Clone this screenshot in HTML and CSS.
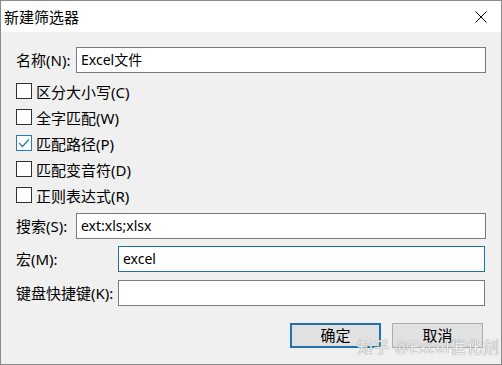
FILE: index.html
```html
<!DOCTYPE html>
<html>
    <head>
        <title>新建筛选器</title>
        <link rel="stylesheet" href="styles.css">
    </head>
    <body>
        <div class="window">
<!----- TITLE BAR ----->
            <div class="titleBar">
                <span class="title">新建筛选器</span>
                <svg class="close" width="12" height="12" viewBox="0 0 12 12">
                    <path d="M0.5 0.5 L11.5 11.5 M11.5 0.5 L0.5 11.5" stroke="#000" stroke-width="1" fill="none"/>
                </svg>
            </div>

<!----- FORM ----->
            <div class="content">
                <div class="row">
                    <label class="label">名称(N):</label>
                    <div class="field">Excel文件</div>
                </div>

                <div class="checks">
                    <div class="check"><span class="box"></span>区分大小写(C)</div>
                    <div class="check"><span class="box"></span>全字匹配(W)</div>
                    <div class="check"><span class="box checked">
                        <svg width="12" height="10" viewBox="0 0 12 10">
                            <path d="M1 5 L4.5 8.5 L11 1.5" stroke="#2c78b4" stroke-width="1.3" fill="none"/>
                        </svg>
                    </span>匹配路径(P)</div>
                    <div class="check"><span class="box"></span>匹配变音符(D)</div>
                    <div class="check"><span class="box"></span>正则表达式(R)</div>
                </div>

                <div class="row search">
                    <label class="label">搜索(S):</label>
                    <div class="field">ext:xls;xlsx</div>
                </div>
                <div class="row macro">
                    <label class="label wide">宏(M):</label>
                    <div class="field focused">excel</div>
                </div>
                <div class="row hotkey">
                    <label class="label wide">键盘快捷键(K):</label>
                    <div class="field"></div>
                </div>

                <div class="buttons">
                    <div class="button default">确定</div>
                    <div class="button">取消</div>
                </div>
            </div>

            <div class="watermark">知乎 @Excel催化剂</div>
        </div>
    </body>
</html>
```

FILE: styles.css
```css
body{
    margin: 0;
    font-family: "Noto Sans", "Noto Sans CJK SC", sans-serif;
    font-size: 15px;
    color: #000;
}
.window{
    position: relative;
    width: 502px;
    height: 365px;
    box-sizing: border-box;
    border: 1px solid #8a8a8a;
    background-color: #f0f0f0;
    overflow: hidden;
}

/*----- TITLE BAR -----*/
.titleBar{
    height: 31px;
    background-color: #fff;
    display: flex;
    align-items: center;
    justify-content: space-between;
    padding: 0 14px 0 3px;
}
.title{
    line-height: 20px;
}
.close{
    display: block;
}

/*----- FORM -----*/
.content{
    padding: 15px 15px 0 15px;
}
.row{
    display: flex;
    align-items: center;
    height: 26px;
}
.label{
    width: 60px;
    flex-shrink: 0;
    line-height: 20px;
}
.label.wide{
    width: 102px;
}
.field{
    flex: 1;
    height: 26px;
    box-sizing: border-box;
    border: 1px solid #7a7a7a;
    background-color: #fff;
    padding: 0 4px;
    line-height: 23px;
    font-size: 14px;
}
.field.focused{
    border-color: #1c72a6;
}
.checks{
    margin-top: 5px;
}
.check{
    display: flex;
    align-items: center;
    height: 26px;
}
.box{
    width: 16px;
    height: 16px;
    box-sizing: border-box;
    border: 1px solid #333;
    background-color: #fff;
    margin-right: 4px;
    display: flex;
    align-items: center;
    justify-content: center;
}
.box.checked{
    border-color: #2c78b4;
}
.search{
    margin-top: 5px;
}
.macro{
    margin-top: 7px;
}
.hotkey{
    margin-top: 8px;
}
.hotkey .field, .macro .field{
    margin-right: 1px;
}

/*----- BUTTONS -----*/
.buttons{
    display: flex;
    justify-content: flex-end;
    gap: 11px;
    margin-top: 17px;
    padding-right: 3px;
}
.button{
    width: 91px;
    height: 25px;
    box-sizing: border-box;
    border: 1px solid #adadad;
    background-color: #e1e1e1;
    text-align: center;
    line-height: 22px;
}
.button.default{
    border: 2px solid #1e73b0;
    line-height: 20px;
}

/*----- WATERMARK -----*/
.watermark{
    position: absolute;
    left: 356px;
    top: 333px;
    font-size: 16px;
    color: rgba(255, 255, 255, 0.85);
    text-shadow: 0 0 1px #999, 0 0 1px #999;
    letter-spacing: 0.5px;
}
```
